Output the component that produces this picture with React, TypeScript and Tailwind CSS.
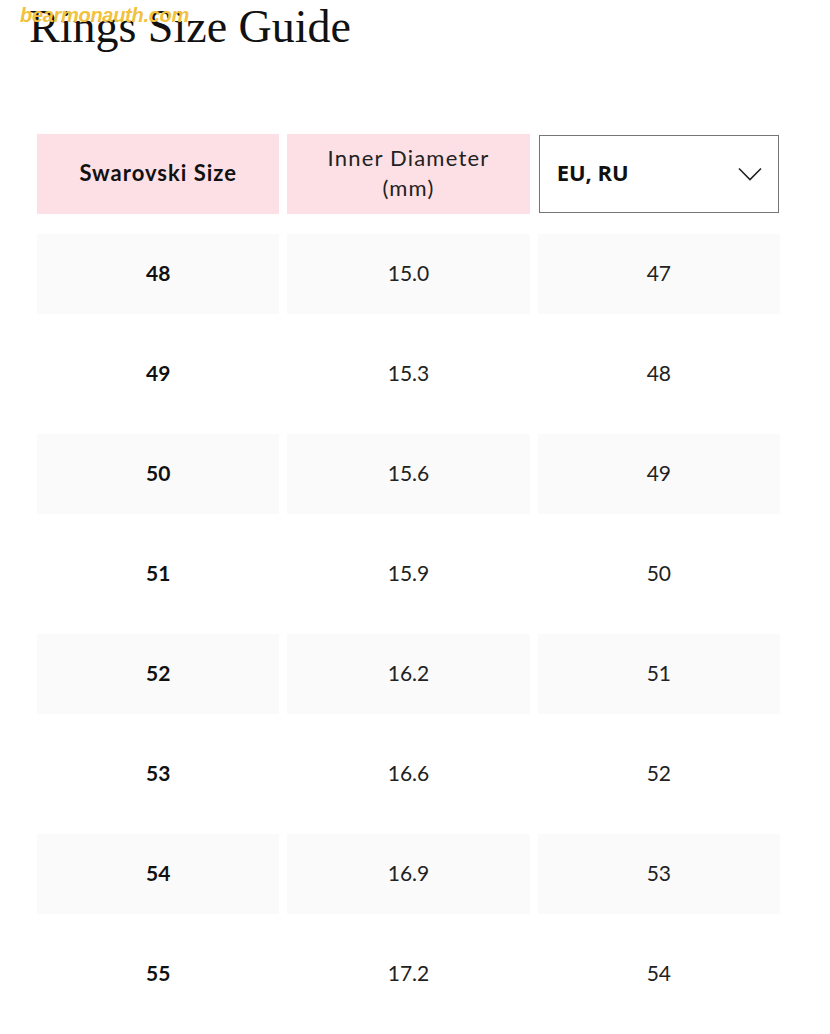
const rows = [
  { size: "48", diameter: "15.0", eu: "47" },
  { size: "49", diameter: "15.3", eu: "48" },
  { size: "50", diameter: "15.6", eu: "49" },
  { size: "51", diameter: "15.9", eu: "50" },
  { size: "52", diameter: "16.2", eu: "51" },
  { size: "53", diameter: "16.6", eu: "52" },
  { size: "54", diameter: "16.9", eu: "53" },
  { size: "55", diameter: "17.2", eu: "54" },
];

export default function App() {
  return (
    <div className="relative w-[830px] h-[1034px] overflow-hidden bg-white text-[#111] font-['Lato',sans-serif]">
      {/* watermark */}
      <span className="absolute left-[20px] top-[0px] text-[20px] font-bold italic text-[#f2c23c] font-['Liberation_Sans',sans-serif] tracking-[-0.3px]">
        bearmonauth.com
      </span>

      <h1 className="pl-[29px] mt-[4px] text-[46px] leading-none font-['Liberation_Serif',serif] text-[#111]">
        Rings Size Guide
      </h1>

      <div className="mt-[84px] ml-[37px] w-[743px] grid grid-cols-3 gap-x-[8px] gap-y-[20px]">
        <div className="h-[80px] pb-[3px] bg-[#fce0e5] flex items-center justify-center text-[22px] font-bold tracking-[1px]">
          Swarovski Size
        </div>
        <div className="h-[80px] pb-[3px] bg-[#fce0e5] flex items-center justify-center text-center text-[22px] leading-[30px] tracking-[1.2px] text-[#222]">
          Inner Diameter
          <br />
          (mm)
        </div>
        <div className="h-[80px] p-[1px]">
          <div className="h-full pb-[3px] border border-[#767676] bg-white flex items-center justify-between pl-[17px] pr-[16px]">
            <span className="text-[22px] font-bold font-['Open_Sans',sans-serif]">EU, RU</span>
            <svg width="24" height="14" viewBox="0 0 24 14" fill="none" className="text-[#222] mt-[3px]">
              <polyline points="1,1.5 12,12.5 23,1.5" stroke="currentColor" strokeWidth="1.6" />
            </svg>
          </div>
        </div>

        {rows.map((row, i) => {
          const bg = i % 2 === 0 ? "bg-[#fafafa]" : "bg-white";
          return [
            <div key={row.size + "a"} className={`h-[80px] pb-[2px] ${bg} flex items-center justify-center text-[21px] font-bold`}>
              {row.size}
            </div>,
            <div key={row.size + "b"} className={`h-[80px] pb-[2px] ${bg} flex items-center justify-center text-[21px] text-[#222]`}>
              {row.diameter}
            </div>,
            <div key={row.size + "c"} className={`h-[80px] pb-[2px] ${bg} flex items-center justify-center text-[21px] text-[#222]`}>
              {row.eu}
            </div>,
          ];
        })}
      </div>
    </div>
  );
}
